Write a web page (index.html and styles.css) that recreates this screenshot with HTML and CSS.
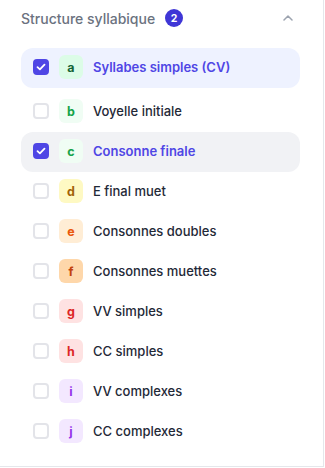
FILE: index.html
```html
<!DOCTYPE html>
<html lang="fr">
<head>
<meta charset="utf-8">
<link rel="stylesheet" href="styles.css">
</head>
<body>
<div class="panel">
  <div class="header">
    <span class="title">Structure syllabique</span>
    <span class="count">2</span>
    <svg class="chevron" width="10" height="6" viewBox="0 0 10 6"><path d="M1 5 L5 1 L9 5" fill="none" stroke="#9ca3af" stroke-width="1.5" stroke-linecap="round" stroke-linejoin="round"/></svg>
  </div>
  <ul class="list">
    <li class="row checked first">
      <span class="box"><svg width="10" height="8" viewBox="0 0 10 8"><path d="M1.5 4.2 L3.9 6.4 L8.5 1.6" fill="none" stroke="#fff" stroke-width="1.8" stroke-linecap="round" stroke-linejoin="round"/></svg></span>
      <span class="tag green1">a</span>
      <span class="label">Syllabes simples (CV)</span>
    </li>
    <li class="row">
      <span class="box"></span>
      <span class="tag green0">b</span>
      <span class="label">Voyelle initiale</span>
    </li>
    <li class="row checked alt">
      <span class="box"><svg width="10" height="8" viewBox="0 0 10 8"><path d="M1.5 4.2 L3.9 6.4 L8.5 1.6" fill="none" stroke="#fff" stroke-width="1.8" stroke-linecap="round" stroke-linejoin="round"/></svg></span>
      <span class="tag green0">c</span>
      <span class="label">Consonne finale</span>
    </li>
    <li class="row">
      <span class="box"></span>
      <span class="tag yellow">d</span>
      <span class="label">E final muet</span>
    </li>
    <li class="row">
      <span class="box"></span>
      <span class="tag orange1">e</span>
      <span class="label">Consonnes doubles</span>
    </li>
    <li class="row">
      <span class="box"></span>
      <span class="tag orange2">f</span>
      <span class="label">Consonnes muettes</span>
    </li>
    <li class="row">
      <span class="box"></span>
      <span class="tag red">g</span>
      <span class="label">VV simples</span>
    </li>
    <li class="row">
      <span class="box"></span>
      <span class="tag red">h</span>
      <span class="label">CC simples</span>
    </li>
    <li class="row">
      <span class="box"></span>
      <span class="tag purple">i</span>
      <span class="label">VV complexes</span>
    </li>
    <li class="row">
      <span class="box"></span>
      <span class="tag purple">j</span>
      <span class="label">CC complexes</span>
    </li>
  </ul>
</div>
</body>
</html>
```
FILE: styles.css
```css
html, body {
  margin: 0;
  padding: 0;
  background: #ffffff;
}
body {
  font-family: "Inter", "Open Sans", sans-serif;
  color: #1f2937;
}
.panel {
  box-sizing: border-box;
  width: 324px;
  height: 467px;
  border-right: 1px solid #e5e7eb;
  border-bottom: 1px solid #e5e7eb;
  padding: 0 23px 0 21px;
}
.header {
  height: 48px;
  display: flex;
  align-items: center;
  padding-bottom: 12px;
  box-sizing: border-box;
}
.title {
  font-size: 14px;
  font-weight: 500;
  color: #6b7280;
}
.count {
  margin-left: 10px;
  width: 18px;
  height: 18px;
  border-radius: 50%;
  background: #3f36d6;
  color: #fff;
  font-size: 10.5px;
  font-weight: 700;
  display: flex;
  align-items: center;
  justify-content: center;
}
.chevron {
  margin-left: auto;
  margin-right: 7px;
}
.list {
  list-style: none;
  margin: 0;
  padding: 0;
  display: flex;
  flex-direction: column;
}
.row {
  height: 40px;
  box-sizing: border-box;
  display: flex;
  align-items: center;
  padding: 0 12px 2px 12px;
  border-radius: 12px;
}
.row.first {
  margin-bottom: 4px;
}
.row.checked.first {
  background: #eef2ff;
}
.row.alt {
  background: #f1f2f5;
}
.box {
  width: 16px;
  height: 16px;
  box-sizing: border-box;
  border: 2px solid #e3e4e9;
  border-radius: 4px;
  background: #fff;
  display: flex;
  align-items: center;
  justify-content: center;
  flex: none;
}
.checked .box {
  background: #4f46e5;
  border-color: #4f46e5;
}
.tag {
  margin-left: 10px;
  width: 24px;
  height: 24px;
  border-radius: 6px;
  display: flex;
  align-items: center;
  justify-content: center;
  font-size: 12.5px;
  font-weight: 700;
  flex: none;
}
.label {
  margin-left: 10px;
  font-size: 13px;
  font-weight: 500;
  color: #1f2937;
}
.checked .label {
  color: #4f46e5;
  font-weight: 600;
}
.green1 { background: #dcfce7; color: #166534; }
.green0 { background: #f0fdf4; color: #16a34a; }
.yellow { background: #fef9c3; color: #a16207; }
.orange1 { background: #ffedd5; color: #ea580c; }
.orange2 { background: #fed7aa; color: #c2410c; }
.red { background: #fee2e2; color: #dc2626; }
.purple { background: #f3e8ff; color: #9333ea; }
```
